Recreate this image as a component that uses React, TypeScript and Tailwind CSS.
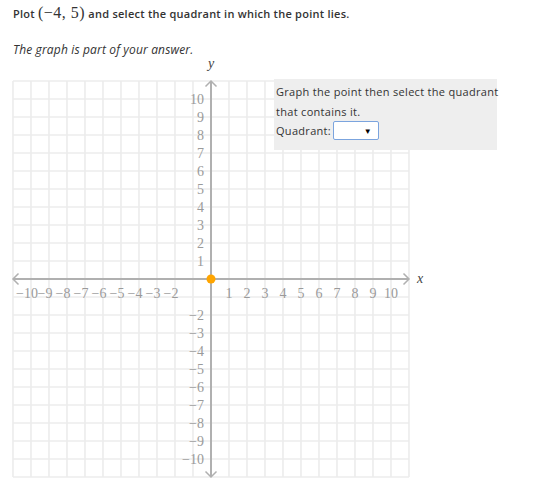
import React from "react";

const OX = 211;
const OY = 279;
const S = 18;
const TOP = 52;

function Graph() {
  const lines = [];
  for (let i = -11; i <= 11; i++) {
    lines.push(
      <line key={"v" + i} x1={OX + S * i} y1={OY - 198} x2={OX + S * i} y2={OY + 198} stroke="#ececec" strokeWidth={1.6} />
    );
    lines.push(
      <line key={"h" + i} x1={OX - 198} y1={OY + S * i} x2={OX + 198} y2={OY + S * i} stroke="#ececec" strokeWidth={1.6} />
    );
  }
  const labels = [];
  for (let k = 1; k <= 10; k++) {
    labels.push(
      <text key={"yp" + k} x={204} y={OY - S * k + 5} textAnchor="end">{k}</text>
    );
    labels.push(
      <text key={"xp" + k} x={OX + S * k} y={OY + 19} textAnchor="middle">{k}</text>
    );
    if (k >= 2) {
      labels.push(
        <text key={"yn" + k} x={204} y={OY + S * k + 5} textAnchor="end">{"\u2212" + k}</text>
      );
      labels.push(
        <text key={"xn" + k} x={OX - S * k + (k === 10 ? 7 : 3.5)} y={OY + 19} textAnchor="end">{"\u2212" + k}</text>
      );
    }
  }
  return (
    <svg width={542} height={494 - TOP} className="block">
      <g transform={`translate(0,${-TOP})`}>
        {lines}
        <g stroke="#b0b0b0" strokeWidth={2} fill="none">
          <line x1={OX} y1={OY - 198} x2={OX} y2={OY + 198} />
          <line x1={OX - 198} y1={OY} x2={OX + 198} y2={OY} />
        </g>
        <g stroke="#b0b0b0" strokeWidth={1.5} fill="none">
          <polyline points={`${OX - 5.5},${OY - 192.5} ${OX},${OY - 198} ${OX + 5.5},${OY - 192.5}`} />
          <polyline points={`${OX - 5.5},${OY + 192.5} ${OX},${OY + 198} ${OX + 5.5},${OY + 192.5}`} />
          <polyline points={`${OX - 192.5},${OY - 5.5} ${OX - 198},${OY} ${OX - 192.5},${OY + 5.5}`} />
          <polyline points={`${OX + 192.5},${OY - 5.5} ${OX + 198},${OY} ${OX + 192.5},${OY + 5.5}`} />
        </g>
        <g fill="#9a9a9a" fontFamily="'Liberation Serif', serif" fontSize={14}>
          {labels}
        </g>
        <text x={OX} y={68} textAnchor="middle" fontFamily="'Liberation Serif', serif" fontStyle="italic" fontSize={14} fill="#444">y</text>
        <text x={420} y={OY + 4} textAnchor="middle" fontFamily="'Liberation Serif', serif" fontStyle="italic" fontSize={14} fill="#444">x</text>
        <circle cx={OX} cy={OY} r={4.5} fill="#ffa500" />
      </g>
    </svg>
  );
}

export default function App() {
  return (
    <div className="relative w-[542px] h-[494px] bg-white overflow-hidden" style={{ fontFamily: "'Open Sans', sans-serif" }}>
      <div className="pl-[13px] pt-[3px] h-[36px] text-[11px] font-semibold text-[#333] tracking-[0.25px] flex items-start">
        <span className="leading-[20px]">
          Plot{" "}
          <span className="font-normal text-[16px] tracking-[0.5px]" style={{ fontFamily: "'Liberation Serif', serif" }}>
            (−4, 5)
          </span>{" "}
          and select the quadrant in which the point lies.
        </span>
      </div>
      <div className="pl-[13px] h-[16px] text-[12px] italic text-[#333] leading-[28px] tracking-[0.15px]">The graph is part of your answer.</div>
      <Graph />
      <div className="absolute left-[274px] top-[79px] w-[223px] h-[71px] bg-[#eeeeee] pl-[2px] pt-[3px] text-[11px] tracking-[0.3px] text-[#333] leading-[19.5px] whitespace-nowrap">
        <div>Graph the point then select the quadrant</div>
        <div>that contains it.</div>
        <div className="flex items-center">
          <span>Quadrant:</span>
          <div className="ml-[2px] w-[46px] h-[19px] border-[1.5px] border-[#7ba4de] rounded-[2px] bg-white flex items-center justify-end pr-[6px]">
            <span className="text-[8px] text-black leading-none">▼</span>
          </div>
        </div>
      </div>
    </div>
  );
}
